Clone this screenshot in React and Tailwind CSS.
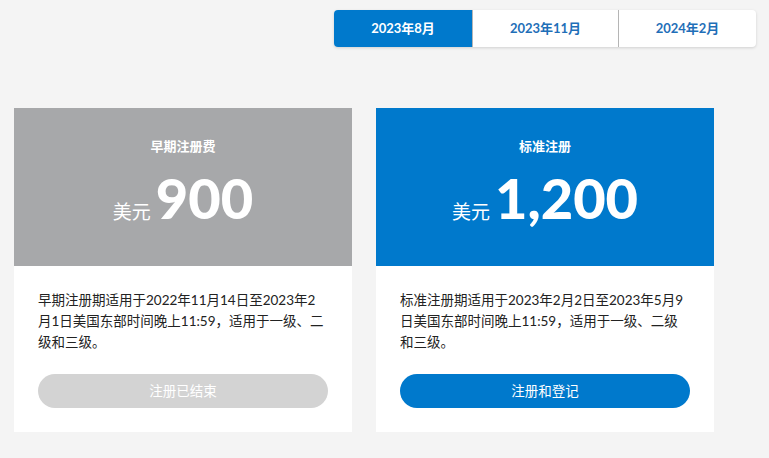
import React, { useState } from 'react';

const tabs = ['2023年8月', '2023年11月', '2024年2月'];

const plans = [
  {
    title: '早期注册费',
    price: '900',
    note: '早期注册期适用于2022年11月14日至2023年2月1日美国东部时间晚上11:59，适用于一级、二级和三级。',
    cta: '注册已结束',
    active: false,
  },
  {
    title: '标准注册',
    price: '1,200',
    note: '标准注册期适用于2023年2月2日至2023年5月9日美国东部时间晚上11:59，适用于一级、二级和三级。',
    cta: '注册和登记',
    active: true,
  },
];

const PlanCard = ({ plan }) => (
  <div className="flex w-[338px] flex-col bg-white">
    <div
      className={`flex h-[158px] flex-col items-center pt-[29px] text-white ${
        plan.active ? 'bg-[#0079cc]' : 'bg-[#a7a8aa]'
      }`}
    >
      <div className="text-[13px] font-bold leading-[18px]">{plan.title}</div>
      <div className="mt-[8px] flex items-baseline gap-[5px]">
        <span className="text-[19px] leading-none">美元</span>
        <span className="text-[56px] font-black leading-[70px]">{plan.price}</span>
      </div>
    </div>
    <div className="flex flex-col px-6 pt-[24px] pb-[24px]">
      <p className="w-[288px] text-[13.5px] leading-[21px] text-[#222]">{plan.note}</p>
      <button
        className={`mt-[21px] h-[34px] w-full rounded-full text-[13.5px] text-white ${
          plan.active ? 'bg-[#0079cc]' : 'bg-[#d3d3d3]'
        }`}
      >
        {plan.cta}
      </button>
    </div>
  </div>
);

export default function App() {
  const [tab, setTab] = useState(0);

  return (
    <div
      className="min-h-[458px] bg-[#f4f4f4]"
      style={{ fontFamily: 'Lato, "Noto Sans CJK SC", sans-serif' }}
    >
      <div className="flex justify-end pt-[10px] pr-[13px]">
        <div className="flex h-[37px] overflow-hidden rounded-[4px] bg-white shadow-[0_1px_3px_rgba(0,0,0,0.15)]">
          {tabs.map((t, i) => (
            <button
              key={t}
              onClick={() => setTab(i)}
              className={`text-[13px] font-bold ${i === 1 ? 'w-[146px]' : 'w-[138px]'} ${
                i > 0 ? 'border-l border-[#b5b5b5]' : ''
              } ${tab === i ? 'bg-[#0079cc] text-white' : 'text-[#1f6fb8]'}`}
            >
              {t}
            </button>
          ))}
        </div>
      </div>

      <div className="mt-[61px] flex gap-6 pl-[14px]">
        {plans.map((p) => (
          <PlanCard key={p.title} plan={p} />
        ))}
      </div>
    </div>
  );
}
